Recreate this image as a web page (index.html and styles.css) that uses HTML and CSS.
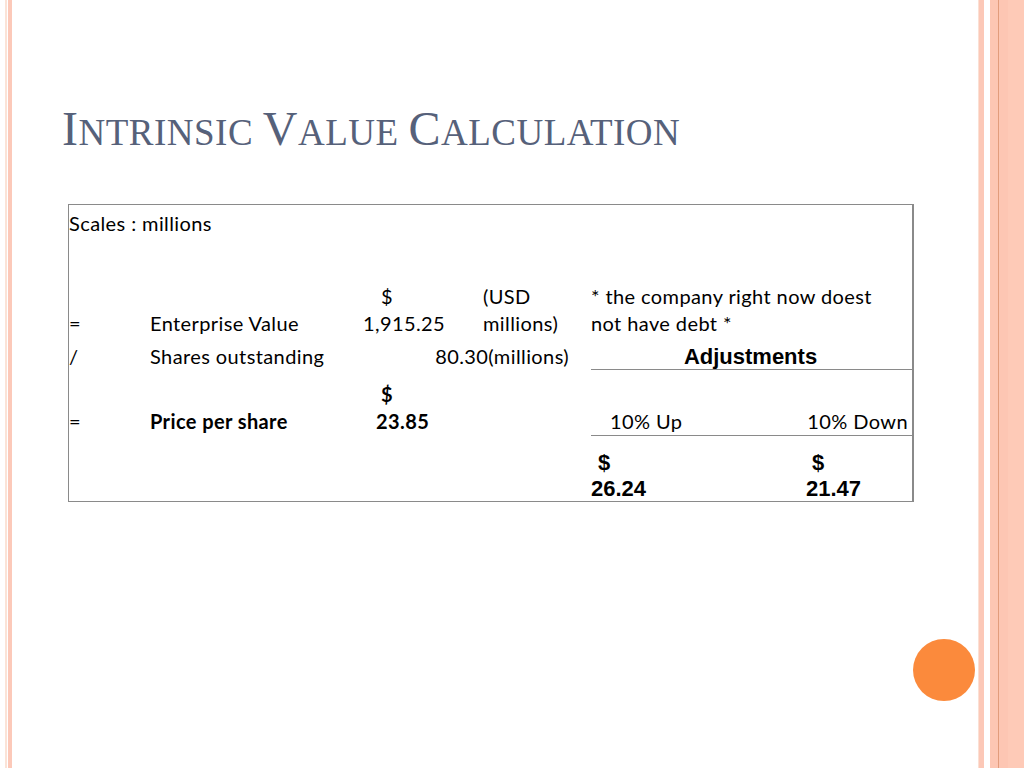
FILE: index.html
```html
<!DOCTYPE html>
<html>
<head>
<meta charset="utf-8">
<link rel="stylesheet" href="styles.css">
</head>
<body>
<div class="slide">
  <h1 class="title"><span class="cap">I</span>ntrinsic <span class="cap">V</span>alue <span class="cap">C</span>alculation</h1>
  <div class="sheet">
    <div class="c r1 span-all">Scales : millions</div>

    <div class="c r2 bottom">=</div>
    <div class="c r2 bottom">Enterprise Value</div>
    <div class="c r2 bottom"><span class="ind18">$</span><span>1,915.25</span></div>
    <div class="c r2 bottom"><span>(USD</span><span>millions)</span></div>
    <div class="c r2 bottom span2">* the company right now doest<br>not have debt *</div>

    <div class="c r3">/</div>
    <div class="c r3">Shares outstanding</div>
    <div class="c r3 span34 right">80.30(millions)</div>
    <div class="c r3 span2 adj">Adjustments</div>

    <div class="c r4 bottom">=</div>
    <div class="c r4 bottom b">Price per share</div>
    <div class="c r4 bottom b"><span class="ind18">$</span><span class="ind13">23.85</span></div>
    <div class="c r4 bottom"></div>
    <div class="c r4 bottom ruled up">10% Up</div>
    <div class="c r4 bottom ruled down">10% Down</div>

    <div class="c r5"></div>
    <div class="c r5"></div>
    <div class="c r5"></div>
    <div class="c r5"></div>
    <div class="c r5 val"><span class="ind7">$</span><span>26.24</span></div>
    <div class="c r5 val"><span class="ind6">$</span><span>21.47</span></div>
  </div>
  <div class="dot"></div>
</div>
</body>
</html>
```

FILE: styles.css
```css
html, body {
  margin: 0;
  padding: 0;
  background: #fff;
}

.slide {
  position: relative;
  width: 1024px;
  height: 768px;
  overflow: hidden;
  box-sizing: border-box;
  padding-top: 101px;
  background-image: linear-gradient(to right,
    #fff 0, #fff 5px,
    #fbe3d7 5px, #fbe3d7 7px,
    #fff 7px, #fff 8px,
    #fcc9b9 8px, #fcc9b9 12px,
    #fff 12px, #fff 978px,
    #fbe0d4 978px, #fbe0d4 979px,
    #fcc8b7 979px, #fcc8b7 984px,
    #fff 984px, #fff 990px,
    #fdc6b3 990px, #fdc6b3 998px,
    #e29c7c 998px, #e29c7c 999px,
    #fdc6b3 999px, #fdc6b3 1008px,
    #fecab7 1008px, #fecab7 1024px);
}

.title {
  margin: 0 0 0 62px;
  font-family: "Liberation Serif", "Times New Roman", serif;
  font-weight: normal;
  font-size: 37px;
  line-height: 56px;
  height: 56px;
  color: #56617a;
  text-transform: uppercase;
  letter-spacing: 0.5px;
}

.title .cap {
  font-size: 48px;
}

.sheet {
  margin: 47px 0 0 68px;
  width: 846px;
  box-sizing: border-box;
  border-top: 1px solid #8a8a8a;
  border-left: 1px solid #8a8a8a;
  border-right: 2px solid #8a8a8a;
  border-bottom: 1px solid #8a8a8a;
  display: grid;
  grid-template-columns: 81px 213px 120px 108px 215px 1fr;
  grid-template-rows: 75px 61px 29px 66px 65px;
  font-family: Lato, "Open Sans", sans-serif;
  font-size: 20px;
  letter-spacing: 0.4px;
  line-height: 27px;
  color: #000;
}

.c {
  display: flex;
  flex-direction: column;
  white-space: nowrap;
  min-width: 0;
}

.span-all { grid-column: 1 / 7; }
.span2 { grid-column: 5 / 7; }
.span34 { grid-column: 3 / 5; }

.r1 { padding-top: 5px; }
.r2.bottom { justify-content: flex-end; padding-bottom: 4px; }
.r3 { padding-top: 2px; }
.r4.bottom { justify-content: flex-end; padding-bottom: 1px; }

.right {
  text-align: right;
  padding-right: 22px;
}

.adj {
  font-family: "Liberation Sans", Arial, sans-serif;
  font-weight: bold;
  font-size: 22px;
  letter-spacing: 0;
  text-align: center;
  border-bottom: 1px solid #8a8a8a;
  padding-top: 2px;
  padding-right: 2px;
}

.b { font-weight: bold; }

.ruled {
  border-bottom: 1px solid #8a8a8a;
}

.r4.ruled { padding-bottom: 0; }

.up { padding-left: 19px; }
.down { text-align: right; padding-right: 4px; }

.ind18 { padding-left: 18px; }
.ind13 { padding-left: 13px; }
.ind7 { padding-left: 7px; }
.ind6 { padding-left: 6px; }

.val {
  font-family: "Liberation Sans", Arial, sans-serif;
  font-weight: bold;
  font-size: 22px;
  letter-spacing: 0;
  line-height: 26px;
  padding-top: 14px;
}

.dot {
  position: absolute;
  left: 913px;
  top: 639px;
  width: 62px;
  height: 62px;
  border-radius: 50%;
  background: #fb8a3c;
}
```
